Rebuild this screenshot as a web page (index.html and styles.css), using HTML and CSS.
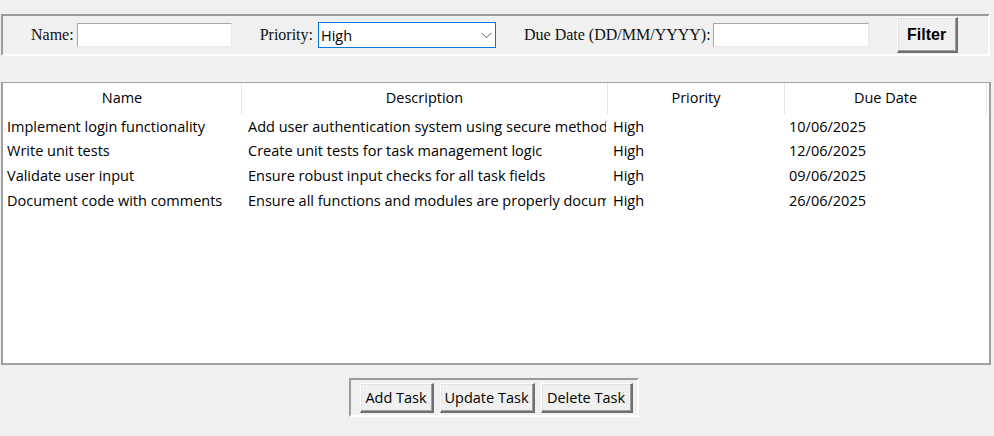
FILE: index.html
```html
<!DOCTYPE html>
<html>
<head>
<meta charset="utf-8">
<link rel="stylesheet" href="styles.css">
</head>
<body>
<div class="filterbar">
  <label class="lbl lbl-name">Name:</label>
  <div class="entry entry-name"></div>
  <label class="lbl lbl-prio">Priority:</label>
  <div class="combo"><span>High</span>
    <svg class="chev" width="11" height="7" viewBox="0 0 11 7"><path d="M0.5 0.8 L5.5 5.8 L10.5 0.8" fill="none" stroke="#606060" stroke-width="1"/></svg>
  </div>
  <label class="lbl lbl-due">Due Date (DD/MM/YYYY):</label>
  <div class="entry entry-due"></div>
  <button class="tkbtn filter">Filter</button>
</div>

<div class="tree">
  <div class="row head">
    <div class="c c1">Name</div>
    <div class="c c2">Description</div>
    <div class="c c3">Priority</div>
    <div class="c c4">Due Date</div>
  </div>
  <div class="row">
    <div class="c c1">Implement login functionality</div>
    <div class="c c2">Add user authentication system using secure methods</div>
    <div class="c c3">High</div>
    <div class="c c4">10/06/2025</div>
  </div>
  <div class="row">
    <div class="c c1">Write unit tests</div>
    <div class="c c2">Create unit tests for task management logic</div>
    <div class="c c3">High</div>
    <div class="c c4">12/06/2025</div>
  </div>
  <div class="row">
    <div class="c c1">Validate user input</div>
    <div class="c c2">Ensure robust input checks for all task fields</div>
    <div class="c c3">High</div>
    <div class="c c4">09/06/2025</div>
  </div>
  <div class="row">
    <div class="c c1">Document code with comments</div>
    <div class="c c2">Ensure all functions and modules are properly documented</div>
    <div class="c c3">High</div>
    <div class="c c4">26/06/2025</div>
  </div>
</div>

<div class="actions">
  <div class="btnframe">
    <button class="tkbtn act b-add">Add Task</button>
    <button class="tkbtn act b-upd">Update Task</button>
    <button class="tkbtn act b-del">Delete Task</button>
  </div>
</div>
</body>
</html>
```

FILE: styles.css
```css
html, body {
  margin: 0;
  padding: 0;
  background: #f0f0f0;
  width: 994px;
  height: 436px;
  overflow: hidden;
}

.filterbar {
  box-sizing: border-box;
  margin: 14px 0 0 1px;
  width: 989px;
  height: 42px;
  border-top: 2px solid #9a9a9a;
  border-left: 2px solid #9a9a9a;
  border-right: 2px solid #ffffff;
  border-bottom: 2px solid #ffffff;
  display: flex;
  align-items: center;
  padding-left: 28px;
}

.lbl {
  font-family: "Liberation Serif", serif;
  font-size: 16px;
  color: #111;
  white-space: nowrap;
}
.lbl-name { margin-right: 3px; }
.lbl-prio { margin-left: 28px; margin-right: 5px; }
.lbl-due { margin-left: 28px; margin-right: 2px; }

.entry {
  box-sizing: border-box;
  height: 24px;
  background: #fff;
  border-top: 1px solid #a8a8a8;
  border-left: 1px solid #a8a8a8;
  border-right: 1px solid #e8e8e8;
  border-bottom: 1px solid #e8e8e8;
}
.entry-name { width: 155px; }
.entry-due { width: 156px; }

.combo {
  box-sizing: border-box;
  width: 178px;
  height: 26px;
  background: #fff;
  border: 1px solid #0078d7;
  display: flex;
  align-items: center;
  justify-content: space-between;
  padding: 0 3px 0 2px;
  font-family: "Open Sans", sans-serif;
  font-size: 14.5px;
  color: #000;
}
.chev { display: block; }

.tkbtn {
  box-sizing: border-box;
  background: #f0f0f0;
  border-top: 1px solid #ffffff;
  border-left: 1px solid #ffffff;
  border-right: 2px solid #707070;
  border-bottom: 2px solid #707070;
  box-shadow: inset -1px -1px 0 #a0a0a0, inset 1px 1px 0 #e3e3e3;
  padding: 0;
  color: #000;
  cursor: default;
}

.filter {
  margin-left: 28px;
  width: 61px;
  height: 36px;
  font-family: "Liberation Sans", sans-serif;
  font-weight: bold;
  font-size: 16px;
}

.tree {
  box-sizing: border-box;
  margin: 26px 0 0 1px;
  width: 990px;
  height: 283px;
  background: #fff;
  border-top: 1px solid #a0a0a0;
  border-left: 2px solid #a0a0a0;
  border-right: 2px solid #a0a0a0;
  border-bottom: 2px solid #a0a0a0;
  padding-top: 1px;
  font-family: "Open Sans", sans-serif;
  font-size: 14.5px;
  color: #000;
  overflow: hidden;
}

.row {
  display: flex;
  height: 24.67px;
  align-items: center;
}
.row.head {
  height: 30px;
}
.c {
  box-sizing: border-box;
  white-space: nowrap;
  overflow: hidden;
  padding-left: 4px;
}
.c1 { width: 239px; }
.c2 { width: 364px; padding-left: 6px; }
.c3 { width: 179px; padding-left: 7px; }
.c4 { width: 204px; padding-left: 4px; }

.head .c {
  text-align: center;
  padding-left: 0;
  height: 100%;
  line-height: 28px;
  border-right: 1px solid #e5e5e5;
}
.head .c2 { width: 366px; }
.head .c3 { width: 177px; }
.head .c4 { border-right: 1px solid #e5e5e5; width: 202px; }

.actions {
  display: flex;
  justify-content: center;
  margin-top: 13px;
  padding-right: 7px;
}
.btnframe {
  box-sizing: border-box;
  display: flex;
  gap: 6px;
  padding: 3px 4px 2px 9px;
  border-top: 2px solid #9a9a9a;
  border-left: 2px solid #9a9a9a;
  border-right: 2px solid #ffffff;
  border-bottom: 2px solid #ffffff;
  height: 39px;
}
.act {
  height: 30px;
  font-family: "Open Sans", sans-serif;
  font-size: 14.5px;
}
.b-add { width: 74px; }
.b-upd { width: 95px; }
.b-del { width: 92px; }
```
